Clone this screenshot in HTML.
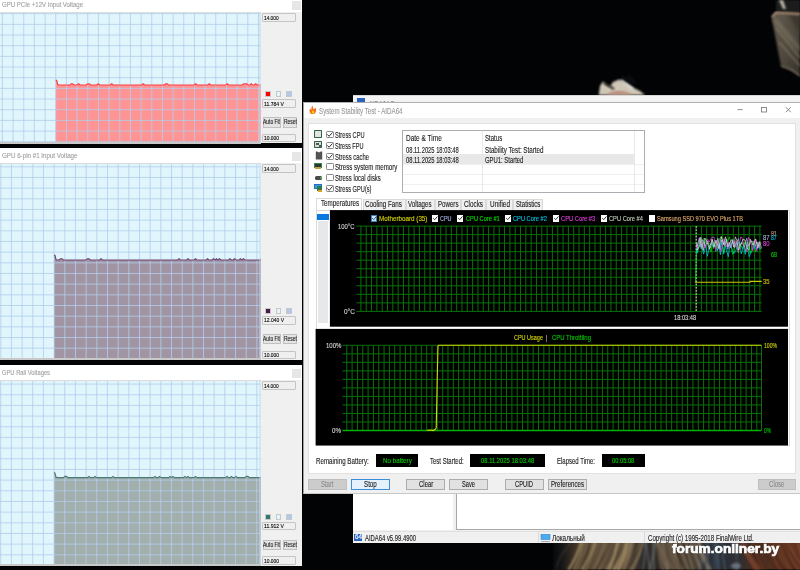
<!DOCTYPE html><html><head><meta charset="utf-8"><style>
html,body{margin:0;padding:0;}
body{width:800px;height:570px;position:relative;overflow:hidden;background:#020304;font-family:"Liberation Sans",sans-serif;}
.t{position:absolute;white-space:pre;transform-origin:0 50%;-webkit-text-stroke:0.12px currentColor;}
</style></head><body>
<svg style="position:absolute;left:0;top:0" width="800" height="570"><defs><filter id="bl" x="-20%" y="-20%" width="140%" height="140%"><feGaussianBlur stdDeviation="1.2"/></filter><filter id="bl2"><feGaussianBlur stdDeviation="2"/></filter><linearGradient id="wing" x1="0" y1="0" x2="1" y2="1"><stop offset="0" stop-color="#625a4c"/><stop offset="0.5" stop-color="#524c40"/><stop offset="1" stop-color="#36322c"/></linearGradient><linearGradient id="hair" gradientUnits="userSpaceOnUse" x1="553" y1="0" x2="800" y2="0"><stop offset="0.000" stop-color="#080808"/><stop offset="0.036" stop-color="#161616"/><stop offset="0.089" stop-color="#3e3226"/><stop offset="0.190" stop-color="#5a4a38"/><stop offset="0.291" stop-color="#56483a"/><stop offset="0.360" stop-color="#2c2a2a"/><stop offset="0.413" stop-color="#342e2a"/><stop offset="0.494" stop-color="#4e4236"/><stop offset="0.587" stop-color="#383634"/><stop offset="0.656" stop-color="#28303a"/><stop offset="0.749" stop-color="#2e2e32"/><stop offset="0.818" stop-color="#4a2c20"/><stop offset="0.919" stop-color="#58321f"/><stop offset="1.000" stop-color="#4a2a1e"/></linearGradient></defs><path d="M776,0 L800,0 L800,14 L776,12 Z" fill="#1c1e1c" filter="url(#bl)"/><path d="M771.5,17 L776,12 L800,13 L800,76 L792,70 L781,66 Z" fill="url(#wing)" filter="url(#bl)"/><path d="M788,14 L800,14 L800,34 Z" fill="#2e2c28" opacity="0.7" filter="url(#bl2)"/><path d="M774,19 L800,50" stroke="#b8a890" stroke-width="3" opacity="0.45" filter="url(#bl2)"/><path d="M776,28 L800,58 M779,42 L800,66" stroke="#a89880" stroke-width="1.3" opacity="0.5" filter="url(#bl)"/><path d="M781,66 L792,70 L800,76" stroke="#c8b8a0" stroke-width="1.2" opacity="0.7" filter="url(#bl)"/><path d="M772,17 L776,12.5 L800,14" stroke="#c8a488" stroke-width="1.6" fill="none" filter="url(#bl)"/><path d="M779,0 L783,9 L786,9 L783,0 Z" fill="#c0b8a8" filter="url(#bl)"/><path d="M598.7,95 L600,86 L603,81.5 L606,84 L610,86.5 L613,82 L619,79.5 L626,83 L634,88 L640,91 L645,95 Z" fill="#cfc6b6" filter="url(#bl)"/><path d="M604,83 L614,89" stroke="#0a0a0a" stroke-width="1.6" filter="url(#bl)"/><path d="M621,80 L633,89" stroke="#e4ecee" stroke-width="1.6" filter="url(#bl)"/><path d="M622,76 L632,83 M628,75 L636,84" stroke="#405060" stroke-width="0.8" opacity="0.6" filter="url(#bl)"/><path d="M606,95 C612,90 624,89 632,95 Z" fill="#b8907e" filter="url(#bl)"/><rect x="553" y="542" width="247" height="27" fill="url(#hair)"/><rect x="553" y="569" width="247" height="1" fill="#141210"/></svg>
<svg style="position:absolute;left:0;top:0" width="800" height="570"><g filter="url(#bl)"><path d="M610.1,542.0 q-3.1,14.0 -10.2,28.0" stroke="#8a7456" stroke-width="1.0" fill="none" opacity="0.7"/><path d="M624.0,542.0 q-3.0,14.0 -10.0,28.0" stroke="#c0a878" stroke-width="1.9" fill="none" opacity="0.7"/><path d="M585.3,542.0 q-3.4,14.0 -11.3,28.0" stroke="#6a5840" stroke-width="1.6" fill="none" opacity="0.7"/><path d="M627.3,542.0 q-2.7,14.0 -9.0,28.0" stroke="#c0a878" stroke-width="1.9" fill="none" opacity="0.7"/><path d="M607.5,542.0 q-2.7,14.0 -9.0,28.0" stroke="#a08a66" stroke-width="0.9" fill="none" opacity="0.7"/><path d="M612.9,542.0 q-4.1,14.0 -13.5,28.0" stroke="#6a5840" stroke-width="0.9" fill="none" opacity="0.7"/><path d="M624.7,542.0 q-3.8,14.0 -12.7,28.0" stroke="#a08a66" stroke-width="1.9" fill="none" opacity="0.7"/><path d="M593.3,542.0 q-2.8,14.0 -9.3,28.0" stroke="#c0a878" stroke-width="1.9" fill="none" opacity="0.7"/><path d="M630.2,542.0 q-4.0,14.0 -13.5,28.0" stroke="#c0a878" stroke-width="1.1" fill="none" opacity="0.7"/><path d="M632.6,542.0 q-2.8,14.0 -9.2,28.0" stroke="#a08a66" stroke-width="1.9" fill="none" opacity="0.7"/><path d="M583.6,542.0 q-3.1,14.0 -10.3,28.0" stroke="#c0a878" stroke-width="1.0" fill="none" opacity="0.7"/><path d="M595.4,542.0 q-3.7,14.0 -12.4,28.0" stroke="#a08a66" stroke-width="2.0" fill="none" opacity="0.7"/><path d="M580.3,542.0 q-3.8,14.0 -12.6,28.0" stroke="#8a7456" stroke-width="1.9" fill="none" opacity="0.7"/><path d="M593.2,542.0 q-2.4,14.0 -8.0,28.0" stroke="#a08a66" stroke-width="1.0" fill="none" opacity="0.7"/><path d="M639.6,542.0 q-3.3,14.0 -11.0,28.0" stroke="#6a5840" stroke-width="1.4" fill="none" opacity="0.7"/><path d="M639.9,542.0 q-3.2,14.0 -10.5,28.0" stroke="#c0a878" stroke-width="1.0" fill="none" opacity="0.7"/><path d="M629.7,542.0 q-3.7,14.0 -12.2,28.0" stroke="#8a7456" stroke-width="1.0" fill="none" opacity="0.7"/><path d="M619.6,542.0 q-4.1,14.0 -13.7,28.0" stroke="#a08a66" stroke-width="1.1" fill="none" opacity="0.7"/><path d="M624.4,542.0 q-3.9,14.0 -13.1,28.0" stroke="#2a2218" stroke-width="1.7" fill="none" opacity="0.7"/><path d="M617.4,542.0 q-2.5,14.0 -8.2,28.0" stroke="#c0a878" stroke-width="1.9" fill="none" opacity="0.7"/><path d="M595.4,542.0 q-3.5,14.0 -11.7,28.0" stroke="#a08a66" stroke-width="1.7" fill="none" opacity="0.7"/><path d="M635.0,542.0 q-3.3,14.0 -11.1,28.0" stroke="#6a5840" stroke-width="1.7" fill="none" opacity="0.7"/><path d="M585.6,542.0 q-3.0,14.0 -10.1,28.0" stroke="#6a5840" stroke-width="1.2" fill="none" opacity="0.7"/><path d="M593.7,542.0 q-2.8,14.0 -9.2,28.0" stroke="#6a5840" stroke-width="1.7" fill="none" opacity="0.7"/><path d="M604.6,542.0 q-3.5,14.0 -11.6,28.0" stroke="#a08a66" stroke-width="1.3" fill="none" opacity="0.7"/><path d="M593.9,542.0 q-3.2,14.0 -10.7,28.0" stroke="#2a2218" stroke-width="1.8" fill="none" opacity="0.7"/><path d="M600.0,542.0 q-2.9,14.0 -9.7,28.0" stroke="#6a5840" stroke-width="1.7" fill="none" opacity="0.7"/><path d="M581.7,542.0 q-3.8,14.0 -12.7,28.0" stroke="#c0a878" stroke-width="1.4" fill="none" opacity="0.7"/><path d="M626.1,542.0 q-2.8,14.0 -9.5,28.0" stroke="#a08a66" stroke-width="1.3" fill="none" opacity="0.7"/><path d="M595.0,542.0 q-4.1,14.0 -13.8,28.0" stroke="#c0a878" stroke-width="1.4" fill="none" opacity="0.7"/><path d="M642.1,542.0 q-3.4,14.0 -11.4,28.0" stroke="#8a7456" stroke-width="1.6" fill="none" opacity="0.7"/><path d="M591.1,542.0 q-3.9,14.0 -13.1,28.0" stroke="#2a2218" stroke-width="0.8" fill="none" opacity="0.7"/><path d="M641.1,542.0 q-3.9,14.0 -12.9,28.0" stroke="#2a2218" stroke-width="1.9" fill="none" opacity="0.7"/><path d="M644.1,542.0 q-3.5,14.0 -11.6,28.0" stroke="#a08a66" stroke-width="0.9" fill="none" opacity="0.7"/><path d="M609.3,542.0 q-3.8,14.0 -12.7,28.0" stroke="#2a2218" stroke-width="1.5" fill="none" opacity="0.7"/><path d="M642.8,542.0 q-3.0,14.0 -10.1,28.0" stroke="#8a7456" stroke-width="1.4" fill="none" opacity="0.7"/><path d="M598.1,542.0 q-4.1,14.0 -13.8,28.0" stroke="#6a5840" stroke-width="1.2" fill="none" opacity="0.7"/><path d="M587.7,542.0 q-3.2,14.0 -10.5,28.0" stroke="#8a7456" stroke-width="1.6" fill="none" opacity="0.7"/><path d="M629.7,542.0 q-3.1,14.0 -10.3,28.0" stroke="#8a7456" stroke-width="1.6" fill="none" opacity="0.7"/><path d="M597.8,542.0 q-3.5,14.0 -11.6,28.0" stroke="#6a5840" stroke-width="1.4" fill="none" opacity="0.7"/><path d="M586.4,542.0 q-2.5,14.0 -8.3,28.0" stroke="#6a5840" stroke-width="1.0" fill="none" opacity="0.7"/><path d="M631.9,542.0 q-3.9,14.0 -12.9,28.0" stroke="#8a7456" stroke-width="1.7" fill="none" opacity="0.7"/><path d="M594.5,542.0 q-2.4,14.0 -8.1,28.0" stroke="#8a7456" stroke-width="1.4" fill="none" opacity="0.7"/><path d="M618.4,542.0 q-3.4,14.0 -11.3,28.0" stroke="#a08a66" stroke-width="1.0" fill="none" opacity="0.7"/><path d="M611.3,542.0 q-4.1,14.0 -13.7,28.0" stroke="#6a5840" stroke-width="0.9" fill="none" opacity="0.7"/><path d="M654.8,542.0 q0.3,14.0 1.0,28.0" stroke="#1a1a1e" stroke-width="0.8" fill="none" opacity="0.6"/><path d="M653.2,542.0 q0.1,14.0 0.3,28.0" stroke="#a0b0b8" stroke-width="0.8" fill="none" opacity="0.6"/><path d="M658.2,542.0 q0.3,14.0 0.9,28.0" stroke="#1a1a1e" stroke-width="0.8" fill="none" opacity="0.6"/><path d="M646.0,542.0 q-1.0,14.0 -3.3,28.0" stroke="#a0b0b8" stroke-width="0.8" fill="none" opacity="0.6"/><path d="M646.5,542.0 q0.7,14.0 2.4,28.0" stroke="#1a1a1e" stroke-width="0.8" fill="none" opacity="0.6"/><path d="M645.9,542.0 q1.4,14.0 4.7,28.0" stroke="#a0b0b8" stroke-width="0.8" fill="none" opacity="0.6"/><path d="M655.2,542.0 q-1.7,14.0 -5.6,28.0" stroke="#a0b0b8" stroke-width="0.8" fill="none" opacity="0.6"/><path d="M658.2,542.0 q-1.0,14.0 -3.2,28.0" stroke="#1a1a1e" stroke-width="0.8" fill="none" opacity="0.6"/><path d="M694.4,542.0 q1.9,14.0 6.3,28.0" stroke="#a08a66" stroke-width="1.4" fill="none" opacity="0.6"/><path d="M685.5,542.0 q2.8,14.0 9.3,28.0" stroke="#a08a66" stroke-width="0.9" fill="none" opacity="0.6"/><path d="M656.5,542.0 q3.6,14.0 12.0,28.0" stroke="#a08a66" stroke-width="0.9" fill="none" opacity="0.6"/><path d="M671.0,542.0 q2.9,14.0 9.8,28.0" stroke="#b09a78" stroke-width="0.8" fill="none" opacity="0.6"/><path d="M689.9,542.0 q2.6,14.0 8.7,28.0" stroke="#2a2218" stroke-width="0.8" fill="none" opacity="0.6"/><path d="M697.9,542.0 q3.2,14.0 10.7,28.0" stroke="#b09a78" stroke-width="1.8" fill="none" opacity="0.6"/><path d="M692.5,542.0 q2.1,14.0 6.8,28.0" stroke="#2a2218" stroke-width="1.5" fill="none" opacity="0.6"/><path d="M675.3,542.0 q2.1,14.0 7.0,28.0" stroke="#7a6650" stroke-width="0.9" fill="none" opacity="0.6"/><path d="M657.4,542.0 q2.0,14.0 6.6,28.0" stroke="#a08a66" stroke-width="1.2" fill="none" opacity="0.6"/><path d="M688.3,542.0 q2.9,14.0 9.7,28.0" stroke="#7a6650" stroke-width="1.2" fill="none" opacity="0.6"/><path d="M683.6,542.0 q2.4,14.0 7.9,28.0" stroke="#2a2218" stroke-width="1.6" fill="none" opacity="0.6"/><path d="M685.7,542.0 q1.8,14.0 6.1,28.0" stroke="#2a2218" stroke-width="1.7" fill="none" opacity="0.6"/><path d="M656.0,542.0 q2.0,14.0 6.8,28.0" stroke="#b09a78" stroke-width="0.9" fill="none" opacity="0.6"/><path d="M666.3,542.0 q3.8,14.0 12.8,28.0" stroke="#7a6650" stroke-width="1.4" fill="none" opacity="0.6"/><path d="M685.7,542.0 q2.1,14.0 7.1,28.0" stroke="#a08a66" stroke-width="1.6" fill="none" opacity="0.6"/><path d="M698.9,542.0 q3.7,14.0 12.3,28.0" stroke="#b09a78" stroke-width="1.7" fill="none" opacity="0.6"/><path d="M694.4,542.0 q4.0,14.0 13.4,28.0" stroke="#a08a66" stroke-width="0.8" fill="none" opacity="0.6"/><path d="M674.8,542.0 q2.8,14.0 9.3,28.0" stroke="#2a2218" stroke-width="1.3" fill="none" opacity="0.6"/><path d="M670.6,542.0 q3.8,14.0 12.7,28.0" stroke="#b09a78" stroke-width="1.2" fill="none" opacity="0.6"/><path d="M658.5,542.0 q2.5,14.0 8.4,28.0" stroke="#b09a78" stroke-width="1.4" fill="none" opacity="0.6"/><path d="M680.6,542.0 q2.9,14.0 9.5,28.0" stroke="#7a6650" stroke-width="1.1" fill="none" opacity="0.6"/><path d="M657.6,542.0 q2.0,14.0 6.7,28.0" stroke="#2a2218" stroke-width="1.3" fill="none" opacity="0.6"/><path d="M663.5,542.0 q3.5,14.0 11.7,28.0" stroke="#7a6650" stroke-width="1.7" fill="none" opacity="0.6"/><path d="M658.9,542.0 q4.1,14.0 13.8,28.0" stroke="#b09a78" stroke-width="1.0" fill="none" opacity="0.6"/><path d="M679.4,542.0 q2.6,14.0 8.7,28.0" stroke="#a08a66" stroke-width="1.5" fill="none" opacity="0.6"/><path d="M674.0,542.0 q2.3,14.0 7.8,28.0" stroke="#2a2218" stroke-width="1.6" fill="none" opacity="0.6"/><path d="M691.0,542.0 q3.0,14.0 10.0,28.0" stroke="#b09a78" stroke-width="1.5" fill="none" opacity="0.6"/><path d="M667.8,542.0 q3.1,14.0 10.3,28.0" stroke="#a08a66" stroke-width="1.0" fill="none" opacity="0.6"/><path d="M699.2,542.0 q2.6,14.0 8.5,28.0" stroke="#a08a66" stroke-width="0.9" fill="none" opacity="0.6"/><path d="M662.3,542.0 q2.0,14.0 6.8,28.0" stroke="#b09a78" stroke-width="1.4" fill="none" opacity="0.6"/><path d="M715.8,542.0 q0.9,14.0 3.1,28.0" stroke="#5a6a78" stroke-width="1.7" fill="none" opacity="0.6"/><path d="M720.3,542.0 q-0.3,14.0 -1.1,28.0" stroke="#1a1e24" stroke-width="1.0" fill="none" opacity="0.6"/><path d="M736.6,542.0 q0.2,14.0 0.5,28.0" stroke="#5a6a78" stroke-width="1.6" fill="none" opacity="0.6"/><path d="M707.1,542.0 q-0.8,14.0 -2.6,28.0" stroke="#1a1e24" stroke-width="1.5" fill="none" opacity="0.6"/><path d="M700.8,542.0 q-0.1,14.0 -0.2,28.0" stroke="#5a6a78" stroke-width="1.2" fill="none" opacity="0.6"/><path d="M739.1,542.0 q-1.0,14.0 -3.3,28.0" stroke="#1a1e24" stroke-width="0.9" fill="none" opacity="0.6"/><path d="M718.1,542.0 q0.4,14.0 1.4,28.0" stroke="#4a5868" stroke-width="1.0" fill="none" opacity="0.6"/><path d="M705.9,542.0 q0.4,14.0 1.4,28.0" stroke="#5a6a78" stroke-width="1.4" fill="none" opacity="0.6"/><path d="M721.8,542.0 q1.0,14.0 3.4,28.0" stroke="#4a5868" stroke-width="1.4" fill="none" opacity="0.6"/><path d="M721.5,542.0 q1.1,14.0 3.6,28.0" stroke="#4a5868" stroke-width="1.3" fill="none" opacity="0.6"/><path d="M713.6,542.0 q0.6,14.0 2.0,28.0" stroke="#4a5868" stroke-width="1.7" fill="none" opacity="0.6"/><path d="M708.7,542.0 q-0.7,14.0 -2.4,28.0" stroke="#5a6a78" stroke-width="1.4" fill="none" opacity="0.6"/><path d="M740.6,542.0 q4.7,14.0 15.5,28.0" stroke="#8a4a30" stroke-width="2.1" fill="none" opacity="0.6"/><path d="M782.9,542.0 q4.5,14.0 15.0,28.0" stroke="#8a4a30" stroke-width="1.3" fill="none" opacity="0.6"/><path d="M787.9,542.0 q5.7,14.0 18.9,28.0" stroke="#7a3e28" stroke-width="1.7" fill="none" opacity="0.6"/><path d="M797.8,542.0 q4.7,14.0 15.6,28.0" stroke="#8a4a2c" stroke-width="2.1" fill="none" opacity="0.6"/><path d="M745.1,542.0 q4.1,14.0 13.5,28.0" stroke="#8a4a2c" stroke-width="1.9" fill="none" opacity="0.6"/><path d="M798.1,542.0 q3.6,14.0 11.9,28.0" stroke="#8a4a30" stroke-width="2.1" fill="none" opacity="0.6"/><path d="M772.4,542.0 q5.0,14.0 16.7,28.0" stroke="#8a4a2c" stroke-width="0.8" fill="none" opacity="0.6"/><path d="M783.0,542.0 q4.8,14.0 15.9,28.0" stroke="#8a4a2c" stroke-width="1.7" fill="none" opacity="0.6"/><path d="M760.3,542.0 q5.1,14.0 17.1,28.0" stroke="#3a2018" stroke-width="1.2" fill="none" opacity="0.6"/><path d="M742.2,542.0 q4.2,14.0 14.1,28.0" stroke="#8a4a2c" stroke-width="1.4" fill="none" opacity="0.6"/><path d="M797.9,542.0 q3.1,14.0 10.4,28.0" stroke="#8a4a2c" stroke-width="2.0" fill="none" opacity="0.6"/><path d="M793.0,542.0 q5.1,14.0 17.1,28.0" stroke="#7a3e28" stroke-width="2.0" fill="none" opacity="0.6"/><path d="M787.4,542.0 q5.8,14.0 19.2,28.0" stroke="#8a4a2c" stroke-width="2.0" fill="none" opacity="0.6"/><path d="M742.0,542.0 q6.0,14.0 20.0,28.0" stroke="#8a4a2c" stroke-width="1.2" fill="none" opacity="0.6"/><path d="M768.9,542.0 q3.5,14.0 11.8,28.0" stroke="#8a4a30" stroke-width="1.5" fill="none" opacity="0.6"/><path d="M769.9,542.0 q3.8,14.0 12.6,28.0" stroke="#3a2018" stroke-width="1.7" fill="none" opacity="0.6"/><path d="M797.0,542.0 q4.0,14.0 13.5,28.0" stroke="#8a4a30" stroke-width="2.2" fill="none" opacity="0.6"/><path d="M784.3,542.0 q4.9,14.0 16.5,28.0" stroke="#7a3e28" stroke-width="1.2" fill="none" opacity="0.6"/><path d="M791.1,542.0 q3.6,14.0 12.1,28.0" stroke="#8a4a30" stroke-width="1.1" fill="none" opacity="0.6"/><path d="M783.2,542.0 q3.8,14.0 12.5,28.0" stroke="#3a2018" stroke-width="1.1" fill="none" opacity="0.6"/><path d="M750.7,542.0 q4.9,14.0 16.4,28.0" stroke="#3a2018" stroke-width="1.3" fill="none" opacity="0.6"/><path d="M778.3,542.0 q4.0,14.0 13.2,28.0" stroke="#8a4a2c" stroke-width="1.6" fill="none" opacity="0.6"/><path d="M741.8,542.0 q5.2,14.0 17.4,28.0" stroke="#8a4a2c" stroke-width="0.9" fill="none" opacity="0.6"/><path d="M752.6,542.0 q3.8,14.0 12.6,28.0" stroke="#7a3e28" stroke-width="1.3" fill="none" opacity="0.6"/><path d="M773.5,542.0 q5.1,14.0 17.1,28.0" stroke="#8a4a30" stroke-width="0.9" fill="none" opacity="0.6"/><ellipse cx="736" cy="566" rx="5" ry="3" fill="#8a9aa8" opacity="0.6"/><path d="M556,568 q4,-14 14,-24" stroke="#6a7a88" stroke-width="0.8" fill="none" opacity="0.5"/></g></svg>
<div style="position:absolute;left:0.00px;top:-1.50px;width:301.50px;height:144.40px;background:#f0f0f0;"></div>
<div style="position:absolute;left:0.00px;top:-1.50px;width:301.50px;height:13.70px;background:#fff;"></div>
<div style="position:absolute;left:0.00px;top:12.20px;width:260.50px;height:0.80px;background:#dcdcdc;"></div>
<div class="t" style="left:1.80px;top:1.43px;font-size:7px;line-height:7px;color:#a0a0a0;transform:scaleX(0.8619);">GPU PCIe +12V Input Voltage</div>
<div style="position:absolute;left:291.50px;top:1.00px;width:9.50px;height:9.00px;background:#e6e6e6;"></div>
<svg style="position:absolute;left:0;top:13.00px" width="260.5" height="129.10" viewBox="0 0 260.5 129.10"><rect x="0" y="0" width="260.5" height="129.10" fill="#e0f6fc"/><path d="M55.7,67.0 L56.7,67.5 L57.7,71.5 L59.2,72.0 L60.7,72.0 L62.2,72.0 L63.7,72.0 L65.2,72.0 L66.7,72.0 L68.2,72.0 L69.7,72.0 L71.2,70.8 L72.7,70.8 L74.2,72.0 L75.7,72.0 L77.2,72.0 L78.7,70.8 L80.2,72.0 L81.7,72.0 L83.2,72.0 L84.7,72.0 L86.2,72.0 L87.7,70.8 L89.2,70.8 L90.7,72.0 L92.2,72.0 L93.7,72.0 L95.2,72.0 L96.7,72.0 L98.2,70.8 L99.7,72.0 L101.2,72.0 L102.7,72.0 L104.2,72.0 L105.7,72.0 L107.2,72.0 L108.7,72.0 L110.2,72.0 L111.7,70.8 L113.2,72.0 L114.7,72.0 L116.2,72.0 L117.7,72.0 L119.2,72.0 L120.7,72.0 L122.2,72.0 L123.7,72.0 L125.2,72.0 L126.7,72.0 L128.2,72.0 L129.7,72.0 L131.2,72.0 L132.7,72.0 L134.2,72.0 L135.7,72.0 L137.2,72.0 L138.7,72.0 L140.2,72.0 L141.7,72.0 L143.2,70.8 L144.7,72.0 L146.2,72.0 L147.7,72.0 L149.2,72.0 L150.7,72.0 L152.2,72.0 L153.7,72.0 L155.2,72.0 L156.7,72.0 L158.2,72.0 L159.7,72.0 L161.2,72.0 L162.7,72.0 L164.2,72.0 L165.7,70.8 L167.2,70.8 L168.7,72.0 L170.2,72.0 L171.7,72.0 L173.2,72.0 L174.7,72.0 L176.2,72.0 L177.7,72.0 L179.2,72.0 L180.7,72.0 L182.2,72.0 L183.7,72.0 L185.2,72.0 L186.7,72.0 L188.2,72.0 L189.7,72.0 L191.2,72.0 L192.7,72.0 L194.2,72.0 L195.7,70.8 L197.2,72.0 L198.7,72.0 L200.2,72.0 L201.7,72.0 L203.2,72.0 L204.7,72.0 L206.2,72.0 L207.7,72.0 L209.2,70.8 L210.7,72.0 L212.2,72.0 L213.7,72.0 L215.2,72.0 L216.7,72.0 L218.2,72.0 L219.7,72.0 L221.2,72.0 L222.7,72.0 L224.2,72.0 L225.7,72.0 L227.2,70.8 L228.7,72.0 L230.2,72.0 L231.7,72.0 L233.2,72.0 L234.7,72.0 L236.2,72.0 L237.7,72.0 L239.2,72.0 L240.7,72.0 L242.2,72.0 L243.7,70.8 L245.2,70.8 L246.7,70.8 L248.2,72.0 L249.7,72.0 L251.2,70.8 L252.7,72.0 L254.2,72.0 L255.7,70.8 L257.2,72.0 L258.7,72.0 L260.2,72.0 L261.7,72.0 L260.5,130.1 L55.7,130.1 Z" fill="#ff9494"/><path d="M2.40,0V129.10 M13.07,0V129.10 M23.74,0V129.10 M34.41,0V129.10 M45.08,0V129.10 M55.75,0V129.10 M66.42,0V129.10 M77.09,0V129.10 M87.76,0V129.10 M98.43,0V129.10 M109.10,0V129.10 M119.77,0V129.10 M130.44,0V129.10 M141.11,0V129.10 M151.78,0V129.10 M162.45,0V129.10 M173.12,0V129.10 M183.79,0V129.10 M194.46,0V129.10 M205.13,0V129.10 M215.80,0V129.10 M226.47,0V129.10 M237.14,0V129.10 M247.81,0V129.10 M258.48,0V129.10 M0,0.70H260.5 M0,11.37H260.5 M0,22.04H260.5 M0,32.71H260.5 M0,43.38H260.5 M0,54.05H260.5 M0,64.72H260.5 M0,75.39H260.5 M0,86.06H260.5 M0,96.73H260.5 M0,107.40H260.5 M0,118.07H260.5 M0,128.74H260.5" stroke="#b2cdec" stroke-opacity="0.85" stroke-width="0.95" fill="none"/><path d="M55.7,67.0 L56.7,67.5 L57.7,71.5 L59.2,72.0 L60.7,72.0 L62.2,72.0 L63.7,72.0 L65.2,72.0 L66.7,72.0 L68.2,72.0 L69.7,72.0 L71.2,70.8 L72.7,70.8 L74.2,72.0 L75.7,72.0 L77.2,72.0 L78.7,70.8 L80.2,72.0 L81.7,72.0 L83.2,72.0 L84.7,72.0 L86.2,72.0 L87.7,70.8 L89.2,70.8 L90.7,72.0 L92.2,72.0 L93.7,72.0 L95.2,72.0 L96.7,72.0 L98.2,70.8 L99.7,72.0 L101.2,72.0 L102.7,72.0 L104.2,72.0 L105.7,72.0 L107.2,72.0 L108.7,72.0 L110.2,72.0 L111.7,70.8 L113.2,72.0 L114.7,72.0 L116.2,72.0 L117.7,72.0 L119.2,72.0 L120.7,72.0 L122.2,72.0 L123.7,72.0 L125.2,72.0 L126.7,72.0 L128.2,72.0 L129.7,72.0 L131.2,72.0 L132.7,72.0 L134.2,72.0 L135.7,72.0 L137.2,72.0 L138.7,72.0 L140.2,72.0 L141.7,72.0 L143.2,70.8 L144.7,72.0 L146.2,72.0 L147.7,72.0 L149.2,72.0 L150.7,72.0 L152.2,72.0 L153.7,72.0 L155.2,72.0 L156.7,72.0 L158.2,72.0 L159.7,72.0 L161.2,72.0 L162.7,72.0 L164.2,72.0 L165.7,70.8 L167.2,70.8 L168.7,72.0 L170.2,72.0 L171.7,72.0 L173.2,72.0 L174.7,72.0 L176.2,72.0 L177.7,72.0 L179.2,72.0 L180.7,72.0 L182.2,72.0 L183.7,72.0 L185.2,72.0 L186.7,72.0 L188.2,72.0 L189.7,72.0 L191.2,72.0 L192.7,72.0 L194.2,72.0 L195.7,70.8 L197.2,72.0 L198.7,72.0 L200.2,72.0 L201.7,72.0 L203.2,72.0 L204.7,72.0 L206.2,72.0 L207.7,72.0 L209.2,70.8 L210.7,72.0 L212.2,72.0 L213.7,72.0 L215.2,72.0 L216.7,72.0 L218.2,72.0 L219.7,72.0 L221.2,72.0 L222.7,72.0 L224.2,72.0 L225.7,72.0 L227.2,70.8 L228.7,72.0 L230.2,72.0 L231.7,72.0 L233.2,72.0 L234.7,72.0 L236.2,72.0 L237.7,72.0 L239.2,72.0 L240.7,72.0 L242.2,72.0 L243.7,70.8 L245.2,70.8 L246.7,70.8 L248.2,72.0 L249.7,72.0 L251.2,70.8 L252.7,72.0 L254.2,72.0 L255.7,70.8 L257.2,72.0 L258.7,72.0 L260.2,72.0 L261.7,72.0" stroke="#ff3c3c" stroke-width="1.1" fill="none"/><rect x="259.5" y="0" width="1" height="129.10" fill="#c8d8ec"/></svg>
<div style="position:absolute;left:0.00px;top:142.10px;width:260.50px;height:1.50px;background:#c8c8c8;"></div>
<div style="position:absolute;left:262.00px;top:13.30px;width:34.00px;height:8.80px;background:#efefef;border:1px solid #c4c4c4;box-sizing:border-box;border-radius:1px;"></div>
<div class="t" style="left:264.40px;top:14.91px;font-size:6.2px;line-height:6.2px;color:#000;transform:scaleX(0.7700);">14.000</div>
<div style="position:absolute;left:265.30px;top:91.40px;width:5.50px;height:5.70px;background:#ff0000;border:1px solid #c8c8c8;box-sizing:border-box;"></div>
<div style="position:absolute;left:275.50px;top:91.40px;width:5.50px;height:5.70px;background:#e0f6fc;border:1px solid #c8c8c8;box-sizing:border-box;"></div>
<div style="position:absolute;left:286.00px;top:91.40px;width:5.80px;height:5.70px;background:#b0c8ec;border:1px solid #c8c8c8;box-sizing:border-box;"></div>
<div style="position:absolute;left:262.00px;top:98.90px;width:34.00px;height:8.80px;background:#efefef;border:1px solid #c4c4c4;box-sizing:border-box;border-radius:1px;"></div>
<div class="t" style="left:264.40px;top:100.51px;font-size:6.2px;line-height:6.2px;color:#000;transform:scaleX(0.8210);">11.784 V</div>
<div style="position:absolute;left:262.50px;top:117.10px;width:18.50px;height:10.50px;background:#e4e4e4;border:1px solid #c0c0c0;box-sizing:border-box;"></div>
<div style="position:absolute;left:283.00px;top:117.10px;width:14.00px;height:10.50px;background:#e4e4e4;border:1px solid #c0c0c0;box-sizing:border-box;"></div>
<div class="t" style="left:263.20px;top:119.36px;font-size:6.3px;line-height:6.3px;color:#222;transform:scaleX(0.7831);">Auto Fit</div>
<div class="t" style="left:283.50px;top:119.36px;font-size:6.3px;line-height:6.3px;color:#222;transform:scaleX(0.7899);">Reset</div>
<div style="position:absolute;left:262.00px;top:133.70px;width:34.00px;height:8.80px;background:#efefef;border:1px solid #c4c4c4;box-sizing:border-box;border-radius:1px;"></div>
<div class="t" style="left:264.40px;top:135.31px;font-size:6.2px;line-height:6.2px;color:#000;transform:scaleX(0.7911);">10.000</div>
<div style="position:absolute;left:0.00px;top:147.60px;width:301.50px;height:212.15px;background:#f0f0f0;"></div>
<div style="position:absolute;left:0.00px;top:147.60px;width:301.50px;height:15.00px;background:#fff;"></div>
<div style="position:absolute;left:0.00px;top:162.60px;width:260.50px;height:1.10px;background:#dcdcdc;"></div>
<div class="t" style="left:1.80px;top:152.03px;font-size:7px;line-height:7px;color:#a0a0a0;transform:scaleX(0.8860);">GPU 6-pin #1 Input Voltage</div>
<div style="position:absolute;left:291.50px;top:151.60px;width:9.50px;height:9.00px;background:#e6e6e6;"></div>
<svg style="position:absolute;left:0;top:163.70px" width="260.5" height="194.30" viewBox="0 0 260.5 194.30"><rect x="0" y="0" width="260.5" height="194.30" fill="#e0f6fc"/><path d="M54.0,91.0 L55.0,91.5 L56.0,95.5 L57.5,96.0 L59.0,96.0 L60.5,94.8 L62.0,94.8 L63.5,96.0 L65.0,96.0 L66.5,96.0 L68.0,96.0 L69.5,96.0 L71.0,96.0 L72.5,96.0 L74.0,96.0 L75.5,96.0 L77.0,96.0 L78.5,96.0 L80.0,96.0 L81.5,96.0 L83.0,96.0 L84.5,96.0 L86.0,96.0 L87.5,94.8 L89.0,94.8 L90.5,96.0 L92.0,96.0 L93.5,96.0 L95.0,96.0 L96.5,96.0 L98.0,96.0 L99.5,96.0 L101.0,94.8 L102.5,96.0 L104.0,96.0 L105.5,96.0 L107.0,96.0 L108.5,96.0 L110.0,96.0 L111.5,96.0 L113.0,96.0 L114.5,96.0 L116.0,96.0 L117.5,96.0 L119.0,96.0 L120.5,96.0 L122.0,96.0 L123.5,96.0 L125.0,96.0 L126.5,96.0 L128.0,96.0 L129.5,96.0 L131.0,96.0 L132.5,96.0 L134.0,96.0 L135.5,96.0 L137.0,96.0 L138.5,96.0 L140.0,96.0 L141.5,96.0 L143.0,96.0 L144.5,96.0 L146.0,96.0 L147.5,96.0 L149.0,96.0 L150.5,96.0 L152.0,96.0 L153.5,96.0 L155.0,96.0 L156.5,96.0 L158.0,96.0 L159.5,96.0 L161.0,96.0 L162.5,96.0 L164.0,96.0 L165.5,96.0 L167.0,96.0 L168.5,96.0 L170.0,96.0 L171.5,96.0 L173.0,96.0 L174.5,96.0 L176.0,96.0 L177.5,96.0 L179.0,94.8 L180.5,96.0 L182.0,96.0 L183.5,96.0 L185.0,96.0 L186.5,96.0 L188.0,94.8 L189.5,96.0 L191.0,96.0 L192.5,96.0 L194.0,96.0 L195.5,94.8 L197.0,96.0 L198.5,96.0 L200.0,96.0 L201.5,96.0 L203.0,96.0 L204.5,96.0 L206.0,96.0 L207.5,94.8 L209.0,96.0 L210.5,96.0 L212.0,96.0 L213.5,94.8 L215.0,96.0 L216.5,94.8 L218.0,96.0 L219.5,94.8 L221.0,96.0 L222.5,96.0 L224.0,96.0 L225.5,96.0 L227.0,96.0 L228.5,96.0 L230.0,94.8 L231.5,96.0 L233.0,96.0 L234.5,94.8 L236.0,96.0 L237.5,96.0 L239.0,96.0 L240.5,94.8 L242.0,96.0 L243.5,94.8 L245.0,96.0 L246.5,96.0 L248.0,96.0 L249.5,96.0 L251.0,96.0 L252.5,96.0 L254.0,96.0 L255.5,96.0 L257.0,96.0 L258.5,96.0 L260.0,96.0 L261.5,94.8 L260.5,195.3 L54.0,195.3 Z" fill="#a295a3"/><path d="M0.80,0V194.30 M11.47,0V194.30 M22.14,0V194.30 M32.81,0V194.30 M43.48,0V194.30 M54.15,0V194.30 M64.82,0V194.30 M75.49,0V194.30 M86.16,0V194.30 M96.83,0V194.30 M107.50,0V194.30 M118.17,0V194.30 M128.84,0V194.30 M139.51,0V194.30 M150.18,0V194.30 M160.85,0V194.30 M171.52,0V194.30 M182.19,0V194.30 M192.86,0V194.30 M203.53,0V194.30 M214.20,0V194.30 M224.87,0V194.30 M235.54,0V194.30 M246.21,0V194.30 M256.88,0V194.30 M0,2.80H260.5 M0,13.47H260.5 M0,24.14H260.5 M0,34.81H260.5 M0,45.48H260.5 M0,56.15H260.5 M0,66.82H260.5 M0,77.49H260.5 M0,88.16H260.5 M0,98.83H260.5 M0,109.50H260.5 M0,120.17H260.5 M0,130.84H260.5 M0,141.51H260.5 M0,152.18H260.5 M0,162.85H260.5 M0,173.52H260.5 M0,184.19H260.5" stroke="#b2cdec" stroke-opacity="0.85" stroke-width="0.95" fill="none"/><path d="M54.0,91.0 L55.0,91.5 L56.0,95.5 L57.5,96.0 L59.0,96.0 L60.5,94.8 L62.0,94.8 L63.5,96.0 L65.0,96.0 L66.5,96.0 L68.0,96.0 L69.5,96.0 L71.0,96.0 L72.5,96.0 L74.0,96.0 L75.5,96.0 L77.0,96.0 L78.5,96.0 L80.0,96.0 L81.5,96.0 L83.0,96.0 L84.5,96.0 L86.0,96.0 L87.5,94.8 L89.0,94.8 L90.5,96.0 L92.0,96.0 L93.5,96.0 L95.0,96.0 L96.5,96.0 L98.0,96.0 L99.5,96.0 L101.0,94.8 L102.5,96.0 L104.0,96.0 L105.5,96.0 L107.0,96.0 L108.5,96.0 L110.0,96.0 L111.5,96.0 L113.0,96.0 L114.5,96.0 L116.0,96.0 L117.5,96.0 L119.0,96.0 L120.5,96.0 L122.0,96.0 L123.5,96.0 L125.0,96.0 L126.5,96.0 L128.0,96.0 L129.5,96.0 L131.0,96.0 L132.5,96.0 L134.0,96.0 L135.5,96.0 L137.0,96.0 L138.5,96.0 L140.0,96.0 L141.5,96.0 L143.0,96.0 L144.5,96.0 L146.0,96.0 L147.5,96.0 L149.0,96.0 L150.5,96.0 L152.0,96.0 L153.5,96.0 L155.0,96.0 L156.5,96.0 L158.0,96.0 L159.5,96.0 L161.0,96.0 L162.5,96.0 L164.0,96.0 L165.5,96.0 L167.0,96.0 L168.5,96.0 L170.0,96.0 L171.5,96.0 L173.0,96.0 L174.5,96.0 L176.0,96.0 L177.5,96.0 L179.0,94.8 L180.5,96.0 L182.0,96.0 L183.5,96.0 L185.0,96.0 L186.5,96.0 L188.0,94.8 L189.5,96.0 L191.0,96.0 L192.5,96.0 L194.0,96.0 L195.5,94.8 L197.0,96.0 L198.5,96.0 L200.0,96.0 L201.5,96.0 L203.0,96.0 L204.5,96.0 L206.0,96.0 L207.5,94.8 L209.0,96.0 L210.5,96.0 L212.0,96.0 L213.5,94.8 L215.0,96.0 L216.5,94.8 L218.0,96.0 L219.5,94.8 L221.0,96.0 L222.5,96.0 L224.0,96.0 L225.5,96.0 L227.0,96.0 L228.5,96.0 L230.0,94.8 L231.5,96.0 L233.0,96.0 L234.5,94.8 L236.0,96.0 L237.5,96.0 L239.0,96.0 L240.5,94.8 L242.0,96.0 L243.5,94.8 L245.0,96.0 L246.5,96.0 L248.0,96.0 L249.5,96.0 L251.0,96.0 L252.5,96.0 L254.0,96.0 L255.5,96.0 L257.0,96.0 L258.5,96.0 L260.0,96.0 L261.5,94.8" stroke="#6e4474" stroke-width="1.1" fill="none"/><rect x="259.5" y="0" width="1" height="194.30" fill="#c8d8ec"/></svg>
<div style="position:absolute;left:0.00px;top:358.00px;width:260.50px;height:1.50px;background:#c8c8c8;"></div>
<div style="position:absolute;left:262.00px;top:164.00px;width:34.00px;height:8.80px;background:#efefef;border:1px solid #c4c4c4;box-sizing:border-box;border-radius:1px;"></div>
<div class="t" style="left:264.40px;top:165.61px;font-size:6.2px;line-height:6.2px;color:#000;transform:scaleX(0.7700);">14.000</div>
<div style="position:absolute;left:265.30px;top:308.25px;width:5.50px;height:5.70px;background:#4a1a4a;border:1px solid #c8c8c8;box-sizing:border-box;"></div>
<div style="position:absolute;left:275.50px;top:308.25px;width:5.50px;height:5.70px;background:#e0f6fc;border:1px solid #c8c8c8;box-sizing:border-box;"></div>
<div style="position:absolute;left:286.00px;top:308.25px;width:5.80px;height:5.70px;background:#b0c8ec;border:1px solid #c8c8c8;box-sizing:border-box;"></div>
<div style="position:absolute;left:262.00px;top:315.75px;width:34.00px;height:8.80px;background:#efefef;border:1px solid #c4c4c4;box-sizing:border-box;border-radius:1px;"></div>
<div class="t" style="left:264.40px;top:317.36px;font-size:6.2px;line-height:6.2px;color:#000;transform:scaleX(0.8058);">12.040 V</div>
<div style="position:absolute;left:262.50px;top:333.95px;width:18.50px;height:10.50px;background:#e4e4e4;border:1px solid #c0c0c0;box-sizing:border-box;"></div>
<div style="position:absolute;left:283.00px;top:333.95px;width:14.00px;height:10.50px;background:#e4e4e4;border:1px solid #c0c0c0;box-sizing:border-box;"></div>
<div class="t" style="left:263.20px;top:336.21px;font-size:6.3px;line-height:6.3px;color:#222;transform:scaleX(0.7831);">Auto Fit</div>
<div class="t" style="left:283.50px;top:336.21px;font-size:6.3px;line-height:6.3px;color:#222;transform:scaleX(0.7899);">Reset</div>
<div style="position:absolute;left:262.00px;top:350.55px;width:34.00px;height:8.80px;background:#efefef;border:1px solid #c4c4c4;box-sizing:border-box;border-radius:1px;"></div>
<div class="t" style="left:264.40px;top:352.16px;font-size:6.2px;line-height:6.2px;color:#000;transform:scaleX(0.7911);">10.000</div>
<div style="position:absolute;left:0.00px;top:365.00px;width:301.50px;height:200.60px;background:#f0f0f0;"></div>
<div style="position:absolute;left:0.00px;top:365.00px;width:301.50px;height:14.80px;background:#fff;"></div>
<div style="position:absolute;left:0.00px;top:379.80px;width:260.50px;height:1.20px;background:#dcdcdc;"></div>
<div class="t" style="left:1.80px;top:369.13px;font-size:7px;line-height:7px;color:#a0a0a0;transform:scaleX(0.8280);">GPU Rail Voltages</div>
<div style="position:absolute;left:291.50px;top:369.00px;width:9.50px;height:9.00px;background:#e6e6e6;"></div>
<svg style="position:absolute;left:0;top:381.00px" width="260.5" height="183.20" viewBox="0 0 260.5 183.20"><rect x="0" y="0" width="260.5" height="183.20" fill="#e0f6fc"/><path d="M54.0,91.6 L55.0,92.1 L56.0,96.1 L57.5,96.6 L59.0,96.6 L60.5,96.6 L62.0,96.6 L63.5,96.6 L65.0,95.4 L66.5,95.4 L68.0,96.6 L69.5,96.6 L71.0,96.6 L72.5,96.6 L74.0,96.6 L75.5,96.6 L77.0,96.6 L78.5,96.6 L80.0,96.6 L81.5,96.6 L83.0,96.6 L84.5,96.6 L86.0,96.6 L87.5,96.6 L89.0,95.4 L90.5,96.6 L92.0,96.6 L93.5,96.6 L95.0,95.4 L96.5,96.6 L98.0,96.6 L99.5,96.6 L101.0,96.6 L102.5,96.6 L104.0,96.6 L105.5,96.6 L107.0,96.6 L108.5,96.6 L110.0,96.6 L111.5,96.6 L113.0,95.4 L114.5,96.6 L116.0,96.6 L117.5,96.6 L119.0,96.6 L120.5,96.6 L122.0,96.6 L123.5,96.6 L125.0,96.6 L126.5,96.6 L128.0,96.6 L129.5,96.6 L131.0,96.6 L132.5,96.6 L134.0,96.6 L135.5,96.6 L137.0,96.6 L138.5,96.6 L140.0,96.6 L141.5,96.6 L143.0,96.6 L144.5,96.6 L146.0,96.6 L147.5,96.6 L149.0,96.6 L150.5,96.6 L152.0,96.6 L153.5,96.6 L155.0,95.4 L156.5,96.6 L158.0,96.6 L159.5,95.4 L161.0,96.6 L162.5,96.6 L164.0,96.6 L165.5,96.6 L167.0,96.6 L168.5,96.6 L170.0,95.4 L171.5,96.6 L173.0,95.4 L174.5,96.6 L176.0,96.6 L177.5,96.6 L179.0,96.6 L180.5,96.6 L182.0,96.6 L183.5,96.6 L185.0,95.4 L186.5,96.6 L188.0,95.4 L189.5,96.6 L191.0,96.6 L192.5,96.6 L194.0,96.6 L195.5,95.4 L197.0,96.6 L198.5,96.6 L200.0,96.6 L201.5,96.6 L203.0,96.6 L204.5,96.6 L206.0,96.6 L207.5,96.6 L209.0,96.6 L210.5,96.6 L212.0,96.6 L213.5,96.6 L215.0,96.6 L216.5,96.6 L218.0,96.6 L219.5,96.6 L221.0,96.6 L222.5,96.6 L224.0,96.6 L225.5,96.6 L227.0,95.4 L228.5,96.6 L230.0,96.6 L231.5,95.4 L233.0,96.6 L234.5,96.6 L236.0,95.4 L237.5,96.6 L239.0,96.6 L240.5,96.6 L242.0,96.6 L243.5,96.6 L245.0,96.6 L246.5,95.4 L248.0,95.4 L249.5,96.6 L251.0,96.6 L252.5,96.6 L254.0,96.6 L255.5,96.6 L257.0,96.6 L258.5,96.6 L260.0,96.6 L261.5,96.6 L260.5,184.2 L54.0,184.2 Z" fill="#a2afad"/><path d="M0.70,0V183.20 M11.37,0V183.20 M22.04,0V183.20 M32.71,0V183.20 M43.38,0V183.20 M54.05,0V183.20 M64.72,0V183.20 M75.39,0V183.20 M86.06,0V183.20 M96.73,0V183.20 M107.40,0V183.20 M118.07,0V183.20 M128.74,0V183.20 M139.41,0V183.20 M150.08,0V183.20 M160.75,0V183.20 M171.42,0V183.20 M182.09,0V183.20 M192.76,0V183.20 M203.43,0V183.20 M214.10,0V183.20 M224.77,0V183.20 M235.44,0V183.20 M246.11,0V183.20 M256.78,0V183.20 M0,3.10H260.5 M0,13.77H260.5 M0,24.44H260.5 M0,35.11H260.5 M0,45.78H260.5 M0,56.45H260.5 M0,67.12H260.5 M0,77.79H260.5 M0,88.46H260.5 M0,99.13H260.5 M0,109.80H260.5 M0,120.47H260.5 M0,131.14H260.5 M0,141.81H260.5 M0,152.48H260.5 M0,163.15H260.5 M0,173.82H260.5" stroke="#b2cdec" stroke-opacity="0.85" stroke-width="0.95" fill="none"/><path d="M54.0,91.6 L55.0,92.1 L56.0,96.1 L57.5,96.6 L59.0,96.6 L60.5,96.6 L62.0,96.6 L63.5,96.6 L65.0,95.4 L66.5,95.4 L68.0,96.6 L69.5,96.6 L71.0,96.6 L72.5,96.6 L74.0,96.6 L75.5,96.6 L77.0,96.6 L78.5,96.6 L80.0,96.6 L81.5,96.6 L83.0,96.6 L84.5,96.6 L86.0,96.6 L87.5,96.6 L89.0,95.4 L90.5,96.6 L92.0,96.6 L93.5,96.6 L95.0,95.4 L96.5,96.6 L98.0,96.6 L99.5,96.6 L101.0,96.6 L102.5,96.6 L104.0,96.6 L105.5,96.6 L107.0,96.6 L108.5,96.6 L110.0,96.6 L111.5,96.6 L113.0,95.4 L114.5,96.6 L116.0,96.6 L117.5,96.6 L119.0,96.6 L120.5,96.6 L122.0,96.6 L123.5,96.6 L125.0,96.6 L126.5,96.6 L128.0,96.6 L129.5,96.6 L131.0,96.6 L132.5,96.6 L134.0,96.6 L135.5,96.6 L137.0,96.6 L138.5,96.6 L140.0,96.6 L141.5,96.6 L143.0,96.6 L144.5,96.6 L146.0,96.6 L147.5,96.6 L149.0,96.6 L150.5,96.6 L152.0,96.6 L153.5,96.6 L155.0,95.4 L156.5,96.6 L158.0,96.6 L159.5,95.4 L161.0,96.6 L162.5,96.6 L164.0,96.6 L165.5,96.6 L167.0,96.6 L168.5,96.6 L170.0,95.4 L171.5,96.6 L173.0,95.4 L174.5,96.6 L176.0,96.6 L177.5,96.6 L179.0,96.6 L180.5,96.6 L182.0,96.6 L183.5,96.6 L185.0,95.4 L186.5,96.6 L188.0,95.4 L189.5,96.6 L191.0,96.6 L192.5,96.6 L194.0,96.6 L195.5,95.4 L197.0,96.6 L198.5,96.6 L200.0,96.6 L201.5,96.6 L203.0,96.6 L204.5,96.6 L206.0,96.6 L207.5,96.6 L209.0,96.6 L210.5,96.6 L212.0,96.6 L213.5,96.6 L215.0,96.6 L216.5,96.6 L218.0,96.6 L219.5,96.6 L221.0,96.6 L222.5,96.6 L224.0,96.6 L225.5,96.6 L227.0,95.4 L228.5,96.6 L230.0,96.6 L231.5,95.4 L233.0,96.6 L234.5,96.6 L236.0,95.4 L237.5,96.6 L239.0,96.6 L240.5,96.6 L242.0,96.6 L243.5,96.6 L245.0,96.6 L246.5,95.4 L248.0,95.4 L249.5,96.6 L251.0,96.6 L252.5,96.6 L254.0,96.6 L255.5,96.6 L257.0,96.6 L258.5,96.6 L260.0,96.6 L261.5,96.6" stroke="#4e7a74" stroke-width="1.1" fill="none"/><rect x="259.5" y="0" width="1" height="183.20" fill="#c8d8ec"/></svg>
<div style="position:absolute;left:0.00px;top:564.20px;width:260.50px;height:1.50px;background:#c8c8c8;"></div>
<div style="position:absolute;left:262.00px;top:381.30px;width:34.00px;height:8.80px;background:#efefef;border:1px solid #c4c4c4;box-sizing:border-box;border-radius:1px;"></div>
<div class="t" style="left:264.40px;top:382.91px;font-size:6.2px;line-height:6.2px;color:#000;transform:scaleX(0.7700);">14.000</div>
<div style="position:absolute;left:265.30px;top:514.10px;width:5.50px;height:5.70px;background:#2e7a70;border:1px solid #c8c8c8;box-sizing:border-box;"></div>
<div style="position:absolute;left:275.50px;top:514.10px;width:5.50px;height:5.70px;background:#e0f6fc;border:1px solid #c8c8c8;box-sizing:border-box;"></div>
<div style="position:absolute;left:286.00px;top:514.10px;width:5.80px;height:5.70px;background:#b0c8ec;border:1px solid #c8c8c8;box-sizing:border-box;"></div>
<div style="position:absolute;left:262.00px;top:521.60px;width:34.00px;height:8.80px;background:#efefef;border:1px solid #c4c4c4;box-sizing:border-box;border-radius:1px;"></div>
<div class="t" style="left:264.40px;top:523.21px;font-size:6.2px;line-height:6.2px;color:#000;transform:scaleX(0.8210);">11.912 V</div>
<div style="position:absolute;left:262.50px;top:539.80px;width:18.50px;height:10.50px;background:#e4e4e4;border:1px solid #c0c0c0;box-sizing:border-box;"></div>
<div style="position:absolute;left:283.00px;top:539.80px;width:14.00px;height:10.50px;background:#e4e4e4;border:1px solid #c0c0c0;box-sizing:border-box;"></div>
<div class="t" style="left:263.20px;top:542.06px;font-size:6.3px;line-height:6.3px;color:#222;transform:scaleX(0.7831);">Auto Fit</div>
<div class="t" style="left:283.50px;top:542.06px;font-size:6.3px;line-height:6.3px;color:#222;transform:scaleX(0.7899);">Reset</div>
<div style="position:absolute;left:262.00px;top:556.40px;width:34.00px;height:8.80px;background:#efefef;border:1px solid #c4c4c4;box-sizing:border-box;border-radius:1px;"></div>
<div class="t" style="left:264.40px;top:558.01px;font-size:6.2px;line-height:6.2px;color:#000;transform:scaleX(0.7911);">10.000</div>
<div style="position:absolute;left:352.50px;top:94.80px;width:448.50px;height:447.70px;background:#f0f0f0;"></div>
<div style="position:absolute;left:352.50px;top:94.80px;width:448.50px;height:6.70px;background:#f4f4f4;border-top:1px solid #d8d8d8;box-sizing:border-box;"></div>
<div style="position:absolute;left:356.80px;top:97.80px;width:8.70px;height:6.20px;background:#2a62c0;"></div>
<div class="t" style="left:369.00px;top:99.55px;font-size:8.6px;line-height:8.6px;color:#8a8a8a;transform:scaleX(0.6827);">AIDA64 Pro</div>
<div style="position:absolute;left:353.00px;top:493.70px;width:99.50px;height:36.80px;background:#fff;"></div>
<div style="position:absolute;left:456.20px;top:493.70px;width:344.80px;height:36.80px;background:#fff;border-left:1px solid #a8a8a8;border-bottom:1px solid #a8a8a8;box-sizing:border-box;"></div>
<div style="position:absolute;left:352.50px;top:531.00px;width:448.50px;height:11.50px;background:#f0f0f0;border-top:1px solid #e0e0e0;box-sizing:border-box;"></div>
<div style="position:absolute;left:353.80px;top:533.80px;width:8.20px;height:7.40px;background:#2a62c0;"></div>
<div class="t" style="left:354.50px;top:534.47px;font-size:6.5px;line-height:6.5px;color:#fff;transform:scaleX(0.9683);">64</div>
<div class="t" style="left:364.50px;top:533.85px;font-size:8.6px;line-height:8.6px;color:#1a1a1a;transform:scaleX(0.6838);">AIDA64 v5.99.4900</div>
<svg style="position:absolute;left:540px;top:532.5px" width="11" height="10" viewBox="0 0 11 10"><rect x="1" y="1.3" width="9" height="5.2" fill="#4aaaf0" stroke="#3a88c8" stroke-width="0.6"/><path d="M1.2,8.6 H9.8" stroke="#8aa0b8" stroke-width="0.9"/></svg>
<div style="position:absolute;left:538.20px;top:532.00px;width:0.80px;height:10.50px;background:#dadada;"></div>
<div class="t" style="left:552.00px;top:533.85px;font-size:8.6px;line-height:8.6px;color:#1a1a1a;transform:scaleX(0.7389);">Локальный</div>
<div style="position:absolute;left:644.30px;top:532.00px;width:1.00px;height:10.50px;background:#d8d8d8;"></div>
<div class="t" style="left:648.00px;top:533.85px;font-size:8.6px;line-height:8.6px;color:#1a1a1a;transform:scaleX(0.7141);">Copyright (c) 1995-2018 FinalWire Ltd.</div>
<div style="position:absolute;left:303.00px;top:101.70px;width:498.00px;height:392.05px;background:#f0f0f0;border-left:1px solid #a0a0a0;border-top:1px solid #b0b0b0;border-bottom:1px solid #c8c8c8;box-sizing:border-box;"></div>
<div style="position:absolute;left:304.00px;top:102.70px;width:497.00px;height:15.10px;background:#fff;"></div>
<svg style="position:absolute;left:308px;top:104.5px" width="10" height="10" viewBox="0 0 10 10"><path d="M4.3,0.6 C5.2,2.2 4.8,3.4 5.8,4.4 C6.3,3.6 7.2,3.2 7.8,2.8 C8,4.5 8.3,6.5 7.2,8 C6.2,9.3 3.4,9.4 2.4,8.2 C1.3,6.8 1.2,4.8 2.2,3.6 C2.6,4.4 3,4.8 3.4,5 C3.2,3.5 3.6,2 4.3,0.6 Z" fill="#f26a12"/><path d="M4.8,5 C5.6,6 6.4,6.6 6.2,7.8 C6,8.8 3.8,8.8 3.6,7.8 C3.4,6.9 4.2,6 4.8,5 Z" fill="#ffcc22"/></svg>
<div class="t" style="left:318.90px;top:107.05px;font-size:8.6px;line-height:8.6px;color:#999999;transform:scaleX(0.7208);">System Stability Test - AIDA64</div>
<svg style="position:absolute;left:730px;top:100px" width="70" height="20" viewBox="0 0 70 20"><path d="M7.5,9.6 H12.7" stroke="#707070" stroke-width="0.8"/><rect x="31.4" y="7.4" width="5" height="4.6" stroke="#707070" stroke-width="0.8" fill="none"/><path d="M55.8,7.2 L60.8,12.2 M60.8,7.2 L55.8,12.2" stroke="#707070" stroke-width="0.8"/></svg>
<div style="position:absolute;left:307.75px;top:122.75px;width:487.75px;height:351.25px;background:#fff;border:1px solid #e2e2e2;box-sizing:border-box;"></div>
<div style="position:absolute;left:326.20px;top:130.90px;width:7.60px;height:7.20px;border:1px solid #8a8a8a;border-radius:1.2px;box-sizing:border-box;background:#fff;"></div>
<svg style="position:absolute;left:326.2px;top:130.90px" width="7.6" height="7.2" viewBox="0 0 7.6 7.2"><path d="M1.4,3.4 L3.1,5.3 L6.5,1.5" stroke="#333" stroke-width="1" fill="none"/></svg>
<div class="t" style="left:335.20px;top:131.15px;font-size:8.6px;line-height:8.6px;color:#1a1a1a;transform:scaleX(0.6590);">Stress CPU</div>
<div style="position:absolute;left:326.20px;top:141.80px;width:7.60px;height:7.20px;border:1px solid #8a8a8a;border-radius:1.2px;box-sizing:border-box;background:#fff;"></div>
<svg style="position:absolute;left:326.2px;top:141.80px" width="7.6" height="7.2" viewBox="0 0 7.6 7.2"><path d="M1.4,3.4 L3.1,5.3 L6.5,1.5" stroke="#333" stroke-width="1" fill="none"/></svg>
<div class="t" style="left:335.20px;top:142.05px;font-size:8.6px;line-height:8.6px;color:#1a1a1a;transform:scaleX(0.6483);">Stress FPU</div>
<div style="position:absolute;left:326.20px;top:152.60px;width:7.60px;height:7.20px;border:1px solid #8a8a8a;border-radius:1.2px;box-sizing:border-box;background:#fff;"></div>
<svg style="position:absolute;left:326.2px;top:152.60px" width="7.6" height="7.2" viewBox="0 0 7.6 7.2"><path d="M1.4,3.4 L3.1,5.3 L6.5,1.5" stroke="#333" stroke-width="1" fill="none"/></svg>
<div class="t" style="left:335.20px;top:152.85px;font-size:8.6px;line-height:8.6px;color:#1a1a1a;transform:scaleX(0.6840);">Stress cache</div>
<div style="position:absolute;left:326.20px;top:163.10px;width:7.60px;height:7.20px;border:1px solid #8a8a8a;border-radius:1.2px;box-sizing:border-box;background:#fff;"></div>
<div class="t" style="left:335.20px;top:163.35px;font-size:8.6px;line-height:8.6px;color:#1a1a1a;transform:scaleX(0.7125);">Stress system memory</div>
<div style="position:absolute;left:326.20px;top:173.60px;width:7.60px;height:7.20px;border:1px solid #8a8a8a;border-radius:1.2px;box-sizing:border-box;background:#fff;"></div>
<div class="t" style="left:335.20px;top:173.85px;font-size:8.6px;line-height:8.6px;color:#1a1a1a;transform:scaleX(0.6895);">Stress local disks</div>
<div style="position:absolute;left:326.20px;top:184.60px;width:7.60px;height:7.20px;border:1px solid #8a8a8a;border-radius:1.2px;box-sizing:border-box;background:#fff;"></div>
<svg style="position:absolute;left:326.2px;top:184.60px" width="7.6" height="7.2" viewBox="0 0 7.6 7.2"><path d="M1.4,3.4 L3.1,5.3 L6.5,1.5" stroke="#333" stroke-width="1" fill="none"/></svg>
<div class="t" style="left:335.20px;top:184.85px;font-size:8.6px;line-height:8.6px;color:#1a1a1a;transform:scaleX(0.6586);">Stress GPU(s)</div>
<div style="position:absolute;left:314.10px;top:130.10px;width:7.90px;height:7.60px;background:#e4e4e4;border:1.6px solid #2e6444;box-sizing:border-box;border-radius:0.8px;"></div>
<div style="position:absolute;left:314.10px;top:140.80px;width:7.90px;height:7.60px;background:#d8dcd8;border:1.6px solid #2e6444;box-sizing:border-box;border-radius:0.8px;"></div>
<div style="position:absolute;left:316.00px;top:142.60px;width:2.50px;height:2.00px;background:#505850;"></div>
<div style="position:absolute;left:318.50px;top:144.60px;width:2.00px;height:2.00px;background:#505850;"></div>
<svg style="position:absolute;left:314.5px;top:151px" width="8" height="9" viewBox="0 0 8 9"><path d="M0.8,0.5 L2.5,0.5 L3,1.3 L5,1.3 L5.5,0.5 L7.2,0.5 L7.2,8.4 L0.8,8.4 Z" fill="#4e4e4e"/><path d="M1.5,3 H6.5 M1.5,5 H6.5 M1.5,7 H6.5" stroke="#6a6a6a" stroke-width="0.5"/></svg>
<div style="position:absolute;left:314.20px;top:163.20px;width:7.80px;height:5.00px;background:#3a8050;"></div>
<div style="position:absolute;left:315.00px;top:164.30px;width:6.20px;height:2.30px;background:#2a3a30;"></div>
<div style="position:absolute;left:315.00px;top:167.40px;width:6.20px;height:1.20px;background:#c0a040;"></div>
<div style="position:absolute;left:314.50px;top:176.30px;width:7.50px;height:3.60px;background:#4a4a4a;border-radius:1.5px;"></div>
<div style="position:absolute;left:319.50px;top:177.30px;width:2.00px;height:1.60px;background:#40a040;"></div>
<div style="position:absolute;left:314.00px;top:184.00px;width:8.00px;height:5.20px;background:#3a9ae8;border:0.7px solid #2070c0;box-sizing:border-box;"></div>
<div style="position:absolute;left:317.30px;top:186.30px;width:5.00px;height:4.70px;background:#2e7a4a;"></div>
<div style="position:absolute;left:318.00px;top:190.20px;width:4.00px;height:1.80px;background:#e0a020;"></div>
<div style="position:absolute;left:401.50px;top:129.90px;width:243.10px;height:63.30px;background:#fff;border:1px solid #abadb3;box-sizing:border-box;"></div>
<div style="position:absolute;left:402.50px;top:154.20px;width:231.50px;height:9.80px;background:#e8e8e8;"></div>
<div style="position:absolute;left:402.50px;top:164.20px;width:241.10px;height:0.80px;background:#f0f0f0;"></div>
<div style="position:absolute;left:402.50px;top:173.90px;width:241.10px;height:0.80px;background:#f0f0f0;"></div>
<div style="position:absolute;left:402.50px;top:183.70px;width:241.10px;height:0.80px;background:#f0f0f0;"></div>
<div style="position:absolute;left:481.80px;top:130.90px;width:0.80px;height:61.30px;background:#e8e8e8;"></div>
<div style="position:absolute;left:633.80px;top:130.90px;width:0.80px;height:61.30px;background:#e8e8e8;"></div>
<div class="t" style="left:405.70px;top:133.95px;font-size:8.6px;line-height:8.6px;color:#1a1a1a;transform:scaleX(0.7566);">Date &amp; Time</div>
<div class="t" style="left:485.00px;top:133.95px;font-size:8.6px;line-height:8.6px;color:#1a1a1a;transform:scaleX(0.7055);">Status</div>
<div class="t" style="left:405.70px;top:146.05px;font-size:8.6px;line-height:8.6px;color:#1a1a1a;transform:scaleX(0.6734);">08.11.2025 18:03:48</div>
<div class="t" style="left:485.00px;top:146.05px;font-size:8.6px;line-height:8.6px;color:#1a1a1a;transform:scaleX(0.7256);">Stability Test: Started</div>
<div class="t" style="left:405.70px;top:155.75px;font-size:8.6px;line-height:8.6px;color:#1a1a1a;transform:scaleX(0.6734);">08.11.2025 18:03:48</div>
<div class="t" style="left:485.00px;top:155.75px;font-size:8.6px;line-height:8.6px;color:#1a1a1a;transform:scaleX(0.6867);">GPU1: Started</div>
<div style="position:absolute;left:362.50px;top:199.00px;width:43.10px;height:11.20px;background:#f0f0f0;border:1px solid #d9d9d9;border-bottom:none;box-sizing:border-box;"></div>
<div class="t" style="left:365.00px;top:200.35px;font-size:8.6px;line-height:8.6px;color:#1a1a1a;transform:scaleX(0.7283);">Cooling Fans</div>
<div style="position:absolute;left:405.60px;top:199.00px;width:29.10px;height:11.20px;background:#f0f0f0;border:1px solid #d9d9d9;border-bottom:none;box-sizing:border-box;"></div>
<div class="t" style="left:407.50px;top:200.35px;font-size:8.6px;line-height:8.6px;color:#1a1a1a;transform:scaleX(0.7123);">Voltages</div>
<div style="position:absolute;left:434.70px;top:199.00px;width:26.30px;height:11.20px;background:#f0f0f0;border:1px solid #d9d9d9;border-bottom:none;box-sizing:border-box;"></div>
<div class="t" style="left:437.50px;top:200.35px;font-size:8.6px;line-height:8.6px;color:#1a1a1a;transform:scaleX(0.7149);">Powers</div>
<div style="position:absolute;left:461.00px;top:199.00px;width:25.30px;height:11.20px;background:#f0f0f0;border:1px solid #d9d9d9;border-bottom:none;box-sizing:border-box;"></div>
<div class="t" style="left:464.00px;top:200.35px;font-size:8.6px;line-height:8.6px;color:#1a1a1a;transform:scaleX(0.7363);">Clocks</div>
<div style="position:absolute;left:486.30px;top:199.00px;width:26.30px;height:11.20px;background:#f0f0f0;border:1px solid #d9d9d9;border-bottom:none;box-sizing:border-box;"></div>
<div class="t" style="left:489.70px;top:200.35px;font-size:8.6px;line-height:8.6px;color:#1a1a1a;transform:scaleX(0.7471);">Unified</div>
<div style="position:absolute;left:512.60px;top:199.00px;width:30.00px;height:11.20px;background:#f0f0f0;border:1px solid #d9d9d9;border-bottom:none;box-sizing:border-box;"></div>
<div class="t" style="left:516.30px;top:200.35px;font-size:8.6px;line-height:8.6px;color:#1a1a1a;transform:scaleX(0.7091);">Statistics</div>
<div style="position:absolute;left:316.20px;top:197.50px;width:46.30px;height:13.00px;background:#fff;border:1px solid #d9d9d9;border-bottom:none;box-sizing:border-box;"></div>
<div class="t" style="left:320.60px;top:199.05px;font-size:8.6px;line-height:8.6px;color:#1a1a1a;transform:scaleX(0.7247);">Temperatures</div>
<div style="position:absolute;left:316.20px;top:210.20px;width:473.80px;height:235.80px;background:#fff;border:1px solid #d9d9d9;box-sizing:border-box;"></div>
<div style="position:absolute;left:317.00px;top:214.30px;width:12.00px;height:5.30px;background:#0a78dc;"></div>
<div style="position:absolute;left:318.30px;top:221.00px;width:9.50px;height:101.50px;background:#e6e8ea;"></div>
<svg style="position:absolute;left:0;top:0" width="800" height="570"><rect x="329.9" y="210.1" width="458.1" height="116.6" fill="#000"/><path d="M356.4,226.10H761.8 M356.4,234.63H761.8 M356.4,243.16H761.8 M356.4,251.69H761.8 M356.4,260.22H761.8 M356.4,268.75H761.8 M356.4,277.28H761.8 M356.4,285.81H761.8 M356.4,294.34H761.8 M356.4,302.87H761.8 M356.4,311.40H761.8 M360.90,226.1V311.4 M366.22,226.1V311.4 M371.54,226.1V311.4 M376.86,226.1V311.4 M382.18,226.1V311.4 M387.50,226.1V311.4 M392.82,226.1V311.4 M398.14,226.1V311.4 M403.46,226.1V311.4 M408.78,226.1V311.4 M414.10,226.1V311.4 M419.42,226.1V311.4 M424.74,226.1V311.4 M430.06,226.1V311.4 M435.38,226.1V311.4 M440.70,226.1V311.4 M446.02,226.1V311.4 M451.34,226.1V311.4 M456.66,226.1V311.4 M461.98,226.1V311.4 M467.30,226.1V311.4 M472.62,226.1V311.4 M477.94,226.1V311.4 M483.26,226.1V311.4 M488.58,226.1V311.4 M493.90,226.1V311.4 M499.22,226.1V311.4 M504.54,226.1V311.4 M509.86,226.1V311.4 M515.18,226.1V311.4 M520.50,226.1V311.4 M525.82,226.1V311.4 M531.14,226.1V311.4 M536.46,226.1V311.4 M541.78,226.1V311.4 M547.10,226.1V311.4 M552.42,226.1V311.4 M557.74,226.1V311.4 M563.06,226.1V311.4 M568.38,226.1V311.4 M573.70,226.1V311.4 M579.02,226.1V311.4 M584.34,226.1V311.4 M589.66,226.1V311.4 M594.98,226.1V311.4 M600.30,226.1V311.4 M605.62,226.1V311.4 M610.94,226.1V311.4 M616.26,226.1V311.4 M621.58,226.1V311.4 M626.90,226.1V311.4 M632.22,226.1V311.4 M637.54,226.1V311.4 M642.86,226.1V311.4 M648.18,226.1V311.4 M653.50,226.1V311.4 M658.82,226.1V311.4 M664.14,226.1V311.4 M669.46,226.1V311.4 M674.78,226.1V311.4 M680.10,226.1V311.4 M685.42,226.1V311.4 M690.74,226.1V311.4 M696.06,226.1V311.4 M701.38,226.1V311.4 M706.70,226.1V311.4 M712.02,226.1V311.4 M717.34,226.1V311.4 M722.66,226.1V311.4 M727.98,226.1V311.4 M733.30,226.1V311.4 M738.62,226.1V311.4 M743.94,226.1V311.4 M749.26,226.1V311.4 M754.58,226.1V311.4 M759.90,226.1V311.4" stroke="#067206" stroke-width="1.0" fill="none"/><path d="M696.2,226.1V311.4" stroke="#e8e8e8" stroke-width="1" stroke-dasharray="1.6,1.6" fill="none"/><polyline points="695.5,282.0 696.6,250.0 697.2,250.6 699.9,240.3 702.0,248.6 704.2,238.0 705.9,243.0 708.2,243.4 711.0,252.0 712.4,243.6 713.7,248.7 715.0,240.4 717.5,251.0 719.5,238.9 721.2,236.5 723.7,252.4 725.3,241.6 727.7,240.8 729.5,236.8 730.7,242.2 732.7,254.4 734.0,251.8 735.6,243.1 738.4,252.8 739.9,243.0 742.4,248.6 744.3,242.3 745.7,251.9 747.6,242.2 750.4,253.1 753.0,242.2 755.6,251.9 758.3,242.2 760.8,249.7" stroke="#00e000" stroke-width="0.75" fill="none"/><polyline points="696.8,248.0 697.2,253.2 699.5,245.2 701.3,244.2 703.6,254.1 705.8,245.2 707.3,256.3 709.8,245.7 711.5,243.3 712.8,245.8 714.8,245.5 717.5,250.6 718.9,243.9 720.4,254.8 721.8,240.3 723.7,254.1 725.5,246.0 728.3,256.8 730.1,243.6 732.3,250.6 734.1,253.5 736.1,250.0 738.0,242.5 739.9,243.4 741.2,253.8 743.6,245.9 745.3,254.4 747.2,244.7 749.2,256.7 751.9,251.0 753.7,244.8 756.4,249.8 758.8,243.7 760.0,250.1" stroke="#00c8e8" stroke-width="0.75" fill="none"/><polyline points="696.8,244.5 697.2,247.8 699.5,237.5 701.1,247.0 703.4,242.1 705.0,248.0 707.5,239.0 709.2,242.0 711.7,237.7 714.0,236.8 715.7,251.5 718.1,239.3 719.9,248.9 721.2,251.3 724.0,238.5 726.4,247.0 728.3,241.8 730.4,247.7 732.5,240.4 734.5,247.6 736.0,240.6 738.3,252.2 740.6,236.9 742.0,237.7 744.3,247.1 746.9,251.8 748.4,237.4 750.7,242.0 752.9,250.7 755.1,239.2 756.9,250.8 758.5,241.8 759.9,247.5" stroke="#e040e0" stroke-width="0.75" fill="none"/><polyline points="696.8,244.0 697.2,245.7 699.4,238.3 701.1,248.7 702.7,239.5 705.2,245.8 707.8,241.1 710.3,248.2 712.4,239.6 714.6,245.8 716.0,246.2 717.8,238.0 720.0,249.4 721.4,240.0 722.9,242.3 724.9,246.1 726.4,239.0 727.8,249.1 729.4,242.7 730.8,247.7 732.8,239.5 734.7,247.5 736.9,242.3 738.4,238.6 739.8,245.9 741.9,242.7 744.6,247.2 746.7,238.3 748.4,246.1 750.3,241.6 751.6,241.3 753.7,241.4 755.5,246.4 756.9,241.8 759.5,246.5" stroke="#a8b8e8" stroke-width="0.7" fill="none"/><polyline points="696.8,243.5 697.2,250.3 699.6,245.8 700.8,237.2 703.4,250.5 705.1,238.1 706.7,240.8 709.3,249.4 712.0,239.2 713.9,247.3 716.0,240.1 718.7,248.5 721.3,236.5 724.0,245.0 725.5,236.8 727.9,246.5 730.5,241.5 731.8,239.5 733.8,247.1 735.3,236.8 736.9,240.4 738.6,250.0 740.5,245.3 743.0,239.4 745.0,240.0 747.7,249.1 748.9,249.9 750.4,239.3 753.1,245.1 755.7,238.9 758.1,248.2 759.8,241.6 761.5,248.5" stroke="#e8e8e8" stroke-width="0.65" fill="none"/><path d="M694.8,282.3H750V281.4H761.8" stroke="#c8c800" stroke-width="1.1" fill="none"/></svg>
<div class="t" style="left:338.00px;top:223.03px;font-size:7px;line-height:7px;color:#d8d8d8;transform:scaleX(0.8396);">100°C</div>
<div class="t" style="left:343.80px;top:307.93px;font-size:7px;line-height:7px;color:#d8d8d8;transform:scaleX(0.9194);">0°C</div>
<div class="t" style="left:674.00px;top:313.53px;font-size:7px;line-height:7px;color:#d8d8d8;transform:scaleX(0.8148);">18:03:48</div>
<div class="t" style="left:763.40px;top:234.13px;font-size:7px;line-height:7px;color:#a8b8e0;transform:scaleX(0.8349);">87</div>
<div class="t" style="left:770.80px;top:230.13px;font-size:7px;line-height:7px;color:#d8a070;transform:scaleX(0.7321);">91</div>
<div class="t" style="left:770.80px;top:234.43px;font-size:7px;line-height:7px;color:#00c0e0;transform:scaleX(0.7321);">87</div>
<div class="t" style="left:763.40px;top:239.83px;font-size:7px;line-height:7px;color:#e040e0;transform:scaleX(0.8478);">80</div>
<div class="t" style="left:771.00px;top:250.63px;font-size:7px;line-height:7px;color:#00d000;transform:scaleX(0.7707);">68</div>
<div class="t" style="left:763.40px;top:278.03px;font-size:7px;line-height:7px;color:#d0c000;transform:scaleX(0.8478);">35</div>
<div style="position:absolute;left:370.60px;top:215.30px;width:6.40px;height:6.40px;background:#cce4f7;border:0.8px solid #3c7fb1;box-sizing:border-box;"></div>
<svg style="position:absolute;left:370.6px;top:215.3px" width="6.4" height="6.4" viewBox="0 0 6.4 6.4"><path d="M1.2,3.2 L2.7,4.7 L5.4,1.5" stroke="#1a4a8a" stroke-width="0.9" fill="none"/></svg>
<div class="t" style="left:378.75px;top:215.03px;font-size:7.4px;line-height:7.4px;color:#d8d800;transform:scaleX(0.8484);">Motherboard (35)</div>
<div style="position:absolute;left:432.00px;top:215.30px;width:6.40px;height:6.40px;background:#fff;border:0.8px solid #fff;box-sizing:border-box;"></div>
<svg style="position:absolute;left:432px;top:215.3px" width="6.4" height="6.4" viewBox="0 0 6.4 6.4"><path d="M1.2,3.2 L2.7,4.7 L5.4,1.5" stroke="#222" stroke-width="0.9" fill="none"/></svg>
<div class="t" style="left:440.00px;top:215.03px;font-size:7.4px;line-height:7.4px;color:#a8b8e8;transform:scaleX(0.7424);">CPU</div>
<div style="position:absolute;left:457.00px;top:215.30px;width:6.40px;height:6.40px;background:#fff;border:0.8px solid #fff;box-sizing:border-box;"></div>
<svg style="position:absolute;left:457px;top:215.3px" width="6.4" height="6.4" viewBox="0 0 6.4 6.4"><path d="M1.2,3.2 L2.7,4.7 L5.4,1.5" stroke="#222" stroke-width="0.9" fill="none"/></svg>
<div class="t" style="left:465.60px;top:215.03px;font-size:7.4px;line-height:7.4px;color:#00e000;transform:scaleX(0.7681);">CPU Core #1</div>
<div style="position:absolute;left:505.00px;top:215.30px;width:6.40px;height:6.40px;background:#fff;border:0.8px solid #fff;box-sizing:border-box;"></div>
<svg style="position:absolute;left:505px;top:215.3px" width="6.4" height="6.4" viewBox="0 0 6.4 6.4"><path d="M1.2,3.2 L2.7,4.7 L5.4,1.5" stroke="#222" stroke-width="0.9" fill="none"/></svg>
<div class="t" style="left:513.00px;top:215.03px;font-size:7.4px;line-height:7.4px;color:#00c8e8;transform:scaleX(0.7704);">CPU Core #2</div>
<div style="position:absolute;left:553.00px;top:215.30px;width:6.40px;height:6.40px;background:#fff;border:0.8px solid #fff;box-sizing:border-box;"></div>
<svg style="position:absolute;left:553px;top:215.3px" width="6.4" height="6.4" viewBox="0 0 6.4 6.4"><path d="M1.2,3.2 L2.7,4.7 L5.4,1.5" stroke="#222" stroke-width="0.9" fill="none"/></svg>
<div class="t" style="left:561.00px;top:215.03px;font-size:7.4px;line-height:7.4px;color:#e040e0;transform:scaleX(0.7795);">CPU Core #3</div>
<div style="position:absolute;left:601.00px;top:215.30px;width:6.40px;height:6.40px;background:#fff;border:0.8px solid #fff;box-sizing:border-box;"></div>
<svg style="position:absolute;left:601px;top:215.3px" width="6.4" height="6.4" viewBox="0 0 6.4 6.4"><path d="M1.2,3.2 L2.7,4.7 L5.4,1.5" stroke="#222" stroke-width="0.9" fill="none"/></svg>
<div class="t" style="left:609.00px;top:215.03px;font-size:7.4px;line-height:7.4px;color:#c0d0b8;transform:scaleX(0.7726);">CPU Core #4</div>
<div style="position:absolute;left:648.60px;top:215.30px;width:6.40px;height:6.40px;background:#fff;border:0.8px solid #fff;box-sizing:border-box;"></div>
<div class="t" style="left:657.00px;top:215.03px;font-size:7.4px;line-height:7.4px;color:#e8b070;transform:scaleX(0.7631);">Samsung SSD 970 EVO Plus 1TB</div>
<svg style="position:absolute;left:0;top:0" width="800" height="570"><rect x="315.6" y="328.9" width="472.4" height="116.6" fill="#000"/><path d="M342.5,345.30H761.5 M342.5,353.82H761.5 M342.5,362.34H761.5 M342.5,370.86H761.5 M342.5,379.38H761.5 M342.5,387.90H761.5 M342.5,396.42H761.5 M342.5,404.94H761.5 M342.5,413.46H761.5 M342.5,421.98H761.5 M346.80,345.3V430.5 M352.12,345.3V430.5 M357.45,345.3V430.5 M362.78,345.3V430.5 M368.10,345.3V430.5 M373.43,345.3V430.5 M378.75,345.3V430.5 M384.07,345.3V430.5 M389.40,345.3V430.5 M394.73,345.3V430.5 M400.05,345.3V430.5 M405.38,345.3V430.5 M410.70,345.3V430.5 M416.03,345.3V430.5 M421.35,345.3V430.5 M426.68,345.3V430.5 M432.00,345.3V430.5 M437.33,345.3V430.5 M442.65,345.3V430.5 M447.98,345.3V430.5 M453.30,345.3V430.5 M458.62,345.3V430.5 M463.95,345.3V430.5 M469.28,345.3V430.5 M474.60,345.3V430.5 M479.93,345.3V430.5 M485.25,345.3V430.5 M490.58,345.3V430.5 M495.90,345.3V430.5 M501.23,345.3V430.5 M506.55,345.3V430.5 M511.88,345.3V430.5 M517.20,345.3V430.5 M522.52,345.3V430.5 M527.85,345.3V430.5 M533.17,345.3V430.5 M538.50,345.3V430.5 M543.83,345.3V430.5 M549.15,345.3V430.5 M554.48,345.3V430.5 M559.80,345.3V430.5 M565.12,345.3V430.5 M570.45,345.3V430.5 M575.77,345.3V430.5 M581.10,345.3V430.5 M586.42,345.3V430.5 M591.75,345.3V430.5 M597.08,345.3V430.5 M602.40,345.3V430.5 M607.73,345.3V430.5 M613.05,345.3V430.5 M618.38,345.3V430.5 M623.70,345.3V430.5 M629.03,345.3V430.5 M634.35,345.3V430.5 M639.67,345.3V430.5 M645.00,345.3V430.5 M650.33,345.3V430.5 M655.65,345.3V430.5 M660.98,345.3V430.5 M666.30,345.3V430.5 M671.62,345.3V430.5 M676.95,345.3V430.5 M682.28,345.3V430.5 M687.60,345.3V430.5 M692.92,345.3V430.5 M698.25,345.3V430.5 M703.58,345.3V430.5 M708.90,345.3V430.5 M714.23,345.3V430.5 M719.55,345.3V430.5 M724.88,345.3V430.5 M730.20,345.3V430.5 M735.53,345.3V430.5 M740.85,345.3V430.5 M746.17,345.3V430.5 M751.50,345.3V430.5 M756.83,345.3V430.5 M761.5,345.3V430.5" stroke="#067206" stroke-width="1.0" fill="none"/><path d="M342.5,430.5H761.5" stroke="#00b000" stroke-width="1.3" fill="none"/><polyline points="427,430.3 431,430 433,430.6 435,429.5 436.2,428 436.8,400 437.3,375 438,346 438.6,345.3 761.5,345.3" stroke="#d8d800" stroke-width="1.1" fill="none"/></svg>
<div class="t" style="left:513.75px;top:334.43px;font-size:7.4px;line-height:7.4px;color:#d8d800;transform:scaleX(0.7423);">CPU Usage</div>
<div class="t" style="left:546.20px;top:334.43px;font-size:7.4px;line-height:7.4px;color:#d8d8d8;transform:scaleX(0.6241);">|</div>
<div class="t" style="left:551.60px;top:334.43px;font-size:7.4px;line-height:7.4px;color:#00d000;transform:scaleX(0.8059);">CPU Throttling</div>
<div class="t" style="left:325.60px;top:341.83px;font-size:7px;line-height:7px;color:#d8d8d8;transform:scaleX(0.8602);">100%</div>
<div class="t" style="left:332.00px;top:427.13px;font-size:7px;line-height:7px;color:#d8d8d8;transform:scaleX(0.8896);">0%</div>
<div class="t" style="left:764.00px;top:341.83px;font-size:7px;line-height:7px;color:#d8d800;transform:scaleX(0.7262);">100%</div>
<div class="t" style="left:764.00px;top:427.13px;font-size:7px;line-height:7px;color:#00d000;transform:scaleX(0.6919);">0%</div>
<div class="t" style="left:316.00px;top:457.25px;font-size:8.6px;line-height:8.6px;color:#1a1a1a;transform:scaleX(0.7213);">Remaining Battery:</div>
<div style="position:absolute;left:375.60px;top:454.00px;width:42.40px;height:12.90px;background:#000;"></div>
<div class="t" style="left:382.50px;top:457.13px;font-size:7px;line-height:7px;color:#00d000;transform:scaleX(0.8903);">No battery</div>
<div class="t" style="left:430.00px;top:457.25px;font-size:8.6px;line-height:8.6px;color:#1a1a1a;transform:scaleX(0.6991);">Test Started:</div>
<div style="position:absolute;left:470.00px;top:454.20px;width:74.50px;height:12.60px;background:#000;"></div>
<div class="t" style="left:480.50px;top:457.13px;font-size:7px;line-height:7px;color:#00d000;transform:scaleX(0.8359);">08.11.2025 18:03:48</div>
<div class="t" style="left:557.00px;top:457.25px;font-size:8.6px;line-height:8.6px;color:#1a1a1a;transform:scaleX(0.6974);">Elapsed Time:</div>
<div style="position:absolute;left:602.30px;top:454.20px;width:42.30px;height:12.40px;background:#000;"></div>
<div class="t" style="left:612.30px;top:457.13px;font-size:7px;line-height:7px;color:#00d000;transform:scaleX(0.8185);">00:05:08</div>
<div style="position:absolute;left:308.10px;top:478.50px;width:38.80px;height:11.20px;background:#cccccc;border:1px solid #bfbfbf;box-sizing:border-box;"></div>
<div class="t" style="left:321.25px;top:480.25px;font-size:8.6px;line-height:8.6px;color:#8c8c8c;transform:scaleX(0.6883);">Start</div>
<div style="position:absolute;left:351.00px;top:478.50px;width:39.00px;height:11.20px;background:#e5f1fb;border:1px solid #3d8fdc;box-sizing:border-box;"></div>
<div class="t" style="left:364.12px;top:480.25px;font-size:8.6px;line-height:8.6px;color:#1a1a1a;transform:scaleX(0.7207);">Stop</div>
<div style="position:absolute;left:406.25px;top:478.50px;width:38.75px;height:11.20px;background:#e1e1e1;border:1px solid #adadad;box-sizing:border-box;"></div>
<div class="t" style="left:418.50px;top:480.25px;font-size:8.6px;line-height:8.6px;color:#1a1a1a;transform:scaleX(0.6934);">Clear</div>
<div style="position:absolute;left:449.25px;top:478.50px;width:38.75px;height:11.20px;background:#e1e1e1;border:1px solid #adadad;box-sizing:border-box;"></div>
<div class="t" style="left:462.12px;top:480.25px;font-size:8.6px;line-height:8.6px;color:#1a1a1a;transform:scaleX(0.6632);">Save</div>
<div style="position:absolute;left:505.00px;top:478.50px;width:38.75px;height:11.20px;background:#e1e1e1;border:1px solid #adadad;box-sizing:border-box;"></div>
<div class="t" style="left:515.38px;top:480.25px;font-size:8.6px;line-height:8.6px;color:#1a1a1a;transform:scaleX(0.6727);">CPUID</div>
<div style="position:absolute;left:548.00px;top:478.50px;width:38.75px;height:11.20px;background:#e1e1e1;border:1px solid #adadad;box-sizing:border-box;"></div>
<div class="t" style="left:550.88px;top:480.25px;font-size:8.6px;line-height:8.6px;color:#1a1a1a;transform:scaleX(0.7117);">Preferences</div>
<div style="position:absolute;left:757.50px;top:478.50px;width:38.50px;height:11.20px;background:#cccccc;border:1px solid #bfbfbf;box-sizing:border-box;"></div>
<div class="t" style="left:769.00px;top:480.25px;font-size:8.6px;line-height:8.6px;color:#8c8c8c;transform:scaleX(0.7050);">Close</div>
<div class="t" style="left:671.60px;top:542.93px;font-size:12.6px;line-height:12.6px;color:#fff;font-weight:bold;transform:scaleX(1.0861);-webkit-text-stroke:0.7px #fff;text-shadow:0 0 1.5px rgba(0,0,0,0.8);">forum.onliner.by</div>
</body></html>
